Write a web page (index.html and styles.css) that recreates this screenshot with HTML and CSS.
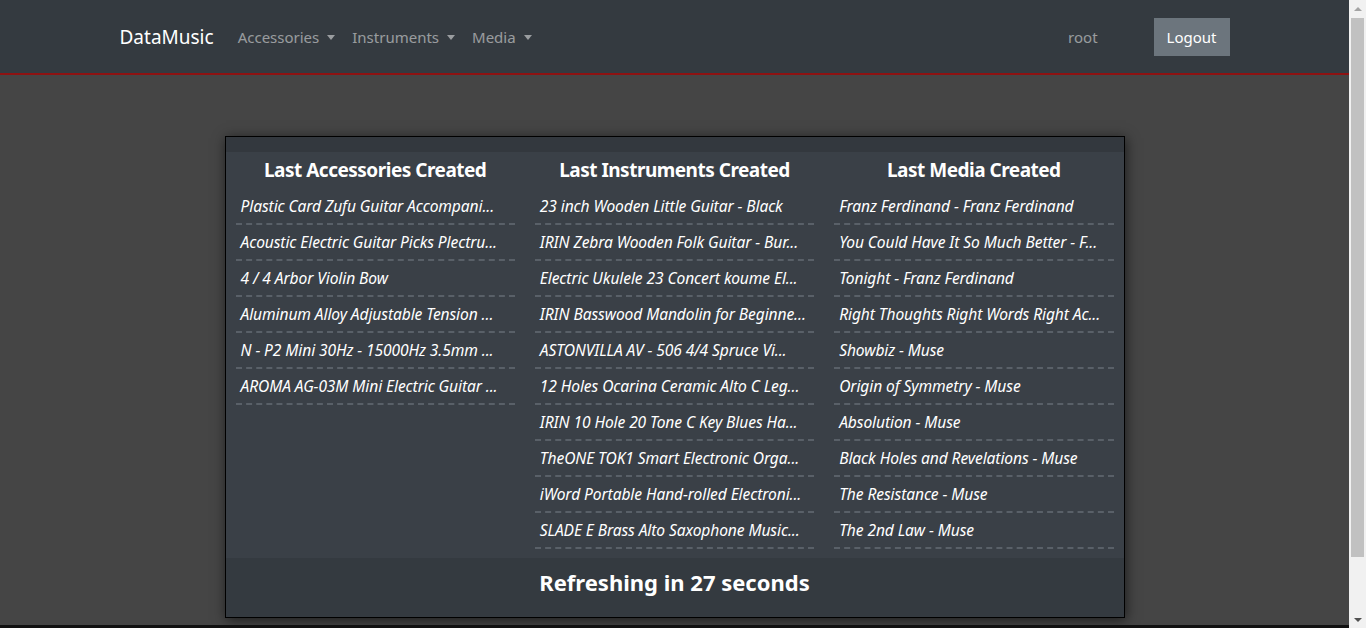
FILE: index.html
```html
<!DOCTYPE html>
<html lang="en">
<head>
<meta charset="utf-8">
<title>DataMusic</title>
<link rel="stylesheet" href="styles.css">
</head>
<body>
<nav class="navbar">
  <div class="container nav-inner">
    <a class="brand" href="#">DataMusic</a>
    <ul class="nav-links">
      <li><a class="nav-link dropdown-toggle" href="#">Accessories</a></li>
      <li><a class="nav-link dropdown-toggle" href="#">Instruments</a></li>
      <li><a class="nav-link dropdown-toggle" href="#">Media</a></li>
    </ul>
    <div class="nav-right">
      <span class="user">root</span>
      <button class="btn-logout" type="button">Logout</button>
    </div>
  </div>
</nav>

<main class="main">
  <div class="card">
    <div class="card-body">
      <div class="cols">
        <section class="col">
          <h4 class="col-title">Last Accessories Created</h4>
          <ul class="items">
            <li>Plastic Card Zufu Guitar Accompani...</li>
            <li>Acoustic Electric Guitar Picks Plectru...</li>
            <li>4 / 4 Arbor Violin Bow</li>
            <li>Aluminum Alloy Adjustable Tension ...</li>
            <li>N - P2 Mini 30Hz - 15000Hz 3.5mm ...</li>
            <li>AROMA AG-03M Mini Electric Guitar ...</li>
          </ul>
        </section>
        <section class="col">
          <h4 class="col-title">Last Instruments Created</h4>
          <ul class="items">
            <li>23 inch Wooden Little Guitar - Black</li>
            <li>IRIN Zebra Wooden Folk Guitar - Bur...</li>
            <li>Electric Ukulele 23 Concert koume El...</li>
            <li>IRIN Basswood Mandolin for Beginne...</li>
            <li>ASTONVILLA AV - 506 4/4 Spruce Vi...</li>
            <li>12 Holes Ocarina Ceramic Alto C Leg...</li>
            <li>IRIN 10 Hole 20 Tone C Key Blues Ha...</li>
            <li>TheONE TOK1 Smart Electronic Orga...</li>
            <li>iWord Portable Hand-rolled Electroni...</li>
            <li>SLADE E Brass Alto Saxophone Music...</li>
          </ul>
        </section>
        <section class="col">
          <h4 class="col-title">Last Media Created</h4>
          <ul class="items">
            <li>Franz Ferdinand - Franz Ferdinand</li>
            <li>You Could Have It So Much Better - F...</li>
            <li>Tonight - Franz Ferdinand</li>
            <li>Right Thoughts Right Words Right Ac...</li>
            <li>Showbiz - Muse</li>
            <li>Origin of Symmetry - Muse</li>
            <li>Absolution - Muse</li>
            <li>Black Holes and Revelations - Muse</li>
            <li>The Resistance - Muse</li>
            <li>The 2nd Law - Muse</li>
          </ul>
        </section>
      </div>
    </div>
    <div class="card-footer">
      <h3 class="refresh">Refreshing in 27 seconds</h3>
    </div>
  </div>
</main>

<footer class="page-footer"></footer>

<div class="scrollbar" aria-hidden="true">
  <div class="sb-btn sb-up"></div>
  <div class="sb-track"><div class="sb-thumb"></div></div>
  <div class="sb-btn sb-down"></div>
</div>
</body>
</html>
```

FILE: styles.css
```css
body {
  margin: 0 17px 0 0;
  background: #454545;
  color: #fff;
  font-family: "Noto Sans", "Open Sans", sans-serif;
  font-size: 15px;
  line-height: 1.5;
}

.container {
  max-width: 1140px;
  margin: 0 auto;
  padding: 0 15px;
  box-sizing: border-box;
}

/* Navbar */
.navbar {
  background: #343a40;
  border-bottom: 2px solid #8e1212;
  padding: 18px 0 17px;
}
.nav-inner {
  display: flex;
  align-items: center;
  height: 38px;
}
.brand {
  color: #fff;
  text-decoration: none;
  font-size: 19px;
  margin-right: 16px;
  line-height: 30px;
}
.nav-links {
  display: flex;
  list-style: none;
  margin: 0;
  padding: 0;
}
.nav-links li + li {
  margin-left: 1px;
}
.nav-link {
  display: block;
  padding: 8px;
  color: rgba(255, 255, 255, 0.5);
  text-decoration: none;
  font-size: 15px;
}
.dropdown-toggle::after {
  content: "";
  display: inline-block;
  margin-left: 8px;
  vertical-align: 3px;
  border-top: 5px solid;
  border-right: 4px solid transparent;
  border-left: 4px solid transparent;
}
.nav-right {
  margin-left: auto;
  display: flex;
  align-items: center;
}
.user {
  color: rgba(255, 255, 255, 0.5);
  font-size: 15px;
  margin-right: 56px;
}
.btn-logout {
  background: #6c757d;
  color: #fff;
  border: 0;
  font-family: inherit;
  font-size: 15px;
  line-height: 24px;
  padding: 7px 13px;
  border-radius: 0;
}

/* Card */
.main {
  padding-top: 61px;
}
.card {
  width: 900px;
  margin: 0 auto;
  box-sizing: border-box;
  background: #33383e;
  border: 1px solid #000;
  box-shadow: 1px 2px 12px rgba(0, 0, 0, 0.6);
}
.card-body {
  padding-top: 15px;
}
.cols {
  background: #3a4047;
  display: grid;
  grid-template-columns: repeat(3, minmax(0, 1fr));
  column-gap: 20px;
  padding: 0 10px 9px;
}
.col {
  min-width: 0;
}
.col-title {
  margin: 0;
  padding: 6px 0 7px;
  text-align: center;
  font-size: 19px;
  letter-spacing: -0.5px;
  line-height: 24px;
  font-weight: 700;
}
.items {
  list-style: none;
  margin: 0;
  padding: 0;
}
.items li {
  height: 34px;
  line-height: 34px;
  padding: 0 5px;
  border-bottom: 2px dashed #596068;
  font-style: italic;
  font-size: 15.6px;
  letter-spacing: -0.1px;
  white-space: nowrap;
}

.card-footer {
  background: #343a40;
  text-align: center;
}
.refresh {
  margin: 0;
  padding: 10px 0 20px;
  font-size: 22px;
  line-height: 29px;
  font-weight: 700;
}

.page-footer {
  margin-top: 7px;
  height: 67px;
  background: #111;
}

/* Imitation of the browser's classic scrollbar in the screenshot */
.scrollbar {
  position: fixed;
  top: 0;
  right: 0;
  width: 17px;
  height: 100vh;
  background: #f1f1f1;
  display: flex;
  flex-direction: column;
}
.sb-btn {
  height: 17px;
  flex: none;
  display: flex;
  align-items: center;
  justify-content: center;
}
.sb-btn::before {
  content: "";
  border-left: 4px solid transparent;
  border-right: 4px solid transparent;
}
.sb-up::before {
  border-bottom: 4px solid #a3a3a3;
}
.sb-down::before {
  border-top: 4px solid #505050;
}
.sb-track {
  flex: 1;
  padding: 1px 2px 0;
}
.sb-thumb {
  height: 539px;
  background: #c1c1c1;
}
```
